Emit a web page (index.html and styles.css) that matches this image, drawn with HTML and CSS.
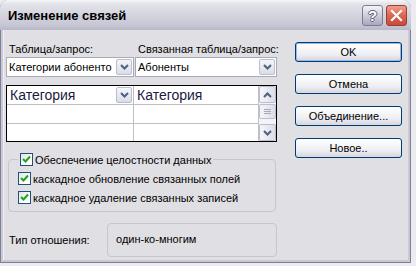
FILE: index.html
```html
<!DOCTYPE html>
<html lang="ru">
<head>
    <meta charset="UTF-8">
    <title>Изменение связей</title>
    <link rel="stylesheet" href="styles.css">
</head>
<body>
    <div class="window">
        <div class="titlebar">
            <span class="title">Изменение связей</span>
            <div class="tb-buttons">
                <span class="tb-btn help">?</span>
                <span class="tb-btn close">
                    <svg width="13" height="13" viewBox="0 0 13 13"><path d="M2 2 L11 11 M11 2 L2 11" stroke="#fff" stroke-width="2.2" stroke-linecap="square"/></svg>
                </span>
            </div>
        </div>
        <div class="client">
            <div class="left">
                <div class="labels">
                    <span class="lbl lbl-1">Таблица/запрос:</span>
                    <span class="lbl">Связанная таблица/запрос:</span>
                </div>
                <div class="combos">
                    <div class="combo combo-1">
                        <span class="combo-text">Категории абоненто</span>
                        <span class="drop"><svg width="9" height="6" viewBox="0 0 9 6"><path d="M1 1 L4.5 4.5 L8 1" fill="none" stroke="#4d6185" stroke-width="2"/></svg></span>
                    </div>
                    <div class="combo combo-2">
                        <span class="combo-text">Абоненты</span>
                        <span class="drop"><svg width="9" height="6" viewBox="0 0 9 6"><path d="M1 1 L4.5 4.5 L8 1" fill="none" stroke="#4d6185" stroke-width="2"/></svg></span>
                    </div>
                </div>
                <div class="grid">
                    <div class="cells">
                        <div class="cell head">
                            <span>Категория</span>
                            <span class="drop"><svg width="9" height="6" viewBox="0 0 9 6"><path d="M1 1 L4.5 4.5 L8 1" fill="none" stroke="#4d6185" stroke-width="2"/></svg></span>
                        </div>
                        <div class="cell head last"><span>Категория</span></div>
                        <div class="cell"></div>
                        <div class="cell last"></div>
                        <div class="cell bottom"></div>
                        <div class="cell last bottom"></div>
                    </div>
                    <div class="scrollbar">
                        <span class="sb-btn"><svg width="9" height="6" viewBox="0 0 9 6"><path d="M1 5 L4.5 1.5 L8 5" fill="none" stroke="#4d6185" stroke-width="2"/></svg></span>
                        <span class="sb-thumb"><svg width="7" height="6" viewBox="0 0 7 6"><path d="M0 0.5 H7 M0 2.5 H7 M0 4.5 H7" stroke="#a4a8b8" stroke-width="1"/></svg></span>
                        <span class="sb-space"></span>
                        <span class="sb-btn"><svg width="9" height="6" viewBox="0 0 9 6"><path d="M1 1 L4.5 4.5 L8 1" fill="none" stroke="#4d6185" stroke-width="2"/></svg></span>
                    </div>
                </div>
                <fieldset class="group">
                    <legend class="check"><span class="box"><svg width="9" height="9" viewBox="0 0 9 9"><path d="M1 4 L3.5 6.5 L8 1.5" fill="none" stroke="#21a121" stroke-width="2"/></svg></span>Обеспечение целостности данных</legend>
                    <div class="check"><span class="box"><svg width="9" height="9" viewBox="0 0 9 9"><path d="M1 4 L3.5 6.5 L8 1.5" fill="none" stroke="#21a121" stroke-width="2"/></svg></span>каскадное обновление связанных полей</div>
                    <div class="check"><span class="box"><svg width="9" height="9" viewBox="0 0 9 9"><path d="M1 4 L3.5 6.5 L8 1.5" fill="none" stroke="#21a121" stroke-width="2"/></svg></span>каскадное удаление связанных записей</div>
                </fieldset>
                <div class="reltype">
                    <span class="rel-label">Тип отношения:</span>
                    <div class="rel-box">один-ко-многим</div>
                </div>
            </div>
            <div class="right">
                <button class="btn default">OK</button>
                <button class="btn">Отмена</button>
                <button class="btn">Объединение...</button>
                <button class="btn">Новое..</button>
            </div>
        </div>
    </div>
</body>
</html>
```

FILE: styles.css
```css
body {
    margin: 0;
    padding: 0;
    width: 416px;
    height: 266px;
    background-color: #ececf0;
    font-family: "Liberation Sans", Arial, sans-serif;
    font-size: 11px;
    color: #000;
    overflow: hidden;
}

.window {
    width: 411px;
    height: 263px;
    box-sizing: border-box;
    border: 1px solid #7f7f98;
    border-top: none;
    border-radius: 8px 8px 0 0;
    background-color: #c9c9d6;
    padding: 0 2px 2px 2px;
    display: flex;
    flex-direction: column;
}

.titlebar {
    height: 30px;
    margin: 0 -3px;
    border-radius: 8px 8px 0 0;
    background: linear-gradient(#f7f7fa 0, #e4e4ec 12%, #d6d6e0 45%, #c8c8d6 80%, #b8b8ca 100%);
    display: flex;
    align-items: center;
    justify-content: space-between;
    padding: 0 4px 0 8px;
    flex-shrink: 0;
}

.title {
    font-family: "Liberation Sans", Arial, sans-serif;
    font-weight: bold;
    font-size: 13px;
    color: #000;
    margin-top: 1px;
}

.tb-buttons {
    display: flex;
    gap: 3px;
}

.tb-btn {
    width: 21px;
    height: 21px;
    box-sizing: border-box;
    border-radius: 3px;
    display: flex;
    align-items: center;
    justify-content: center;
}

.help {
    border: 1px solid #7b7b98;
    background: linear-gradient(#f4f4f8, #c6c6d4 60%, #a9a9bc);
    color: #fff;
    font-weight: bold;
    font-size: 15px;
    text-shadow: 1px 0 #5e5e78, -1px 0 #5e5e78, 0 1px #5e5e78, 0 -1px #5e5e78;
}

.close {
    border: 1px solid #9a3e34;
    background: linear-gradient(#f0a08c, #dc6a55 45%, #c94a36);
}

.client {
    flex: 1;
    background-color: #e0dfe3;
    border-left: 1px solid #f0f0f4;
    display: flex;
    padding: 12px 0 0 2px;
}

.left {
    width: 271px;
}

.labels {
    display: flex;
    height: 14px;
    line-height: 14px;
    white-space: nowrap;
}

.lbl {
    padding-left: 3px;
}

.lbl-1 {
    width: 126px;
    flex-shrink: 0;
}

.combos {
    display: flex;
    gap: 1px;
    margin-top: 1px;
}

.combo {
    height: 20px;
    box-sizing: border-box;
    background-color: #fff;
    border: 1px solid #a5acb5;
    display: flex;
    align-items: center;
    justify-content: space-between;
    padding: 0 1px 0 2px;
}

.combo-1 {
    width: 128px;
}

.combo-2 {
    width: 142px;
}

.combo-text {
    white-space: nowrap;
    overflow: hidden;
}

.drop {
    width: 16px;
    height: 16px;
    box-sizing: border-box;
    border: 1px solid #b8bfd2;
    border-radius: 2px;
    background: linear-gradient(#f6f6f9, #dcdce6);
    display: flex;
    align-items: center;
    justify-content: center;
    flex-shrink: 0;
}

.grid {
    margin-top: 8px;
    height: 57px;
    box-sizing: border-box;
    border: 1px solid #000;
    background-color: #fff;
    display: flex;
}

.cells {
    flex: 1;
    display: grid;
    grid-template-columns: 127px 1fr;
    grid-template-rows: 19px 19px 1fr;
}

.cell {
    border-right: 1px solid #c0c0c0;
    border-bottom: 1px solid #c0c0c0;
    display: flex;
    align-items: center;
    justify-content: space-between;
    padding: 0 1px 0 3px;
}

.cell.bottom {
    border-bottom: none;
}

.head {
    font-size: 14px;
    color: #1a1a40;
}

.scrollbar {
    width: 17px;
    display: flex;
    flex-direction: column;
    background-color: #f4f4f6;
}

.sb-btn {
    height: 17px;
    box-sizing: border-box;
    border: 1px solid #b8bfd2;
    border-radius: 2px;
    background: linear-gradient(90deg, #f6f6f9, #dcdce6);
    display: flex;
    align-items: center;
    justify-content: center;
}

.sb-thumb {
    height: 15px;
    margin-top: 1px;
    box-sizing: border-box;
    border: 1px solid #b8bfd2;
    border-radius: 2px;
    background: linear-gradient(90deg, #f6f6f9, #dcdce6);
    display: flex;
    align-items: center;
    justify-content: center;
}

.sb-space {
    flex: 1;
}

.group {
    margin: 8px 0 0 2px;
    width: 268px;
    box-sizing: border-box;
    border: 1px solid #c6c6d0;
    border-radius: 4px;
    padding: 0 0 4px 9px;
}

.group legend {
    padding: 0 2px;
}

.check {
    display: flex;
    align-items: center;
    height: 19px;
    white-space: nowrap;
}

.box {
    width: 13px;
    height: 13px;
    box-sizing: border-box;
    border: 1px solid #1c5180;
    background: linear-gradient(135deg, #e4e4de, #fff 70%);
    display: flex;
    align-items: center;
    justify-content: center;
    margin-right: 2px;
}

.reltype {
    display: flex;
    align-items: center;
    margin-top: 11px;
    margin-left: 3px;
}

.rel-label {
    width: 98px;
}

.rel-box {
    width: 170px;
    height: 34px;
    box-sizing: border-box;
    border: 1px solid #c6c6d0;
    border-radius: 4px;
    padding: 9px 0 0 8px;
}

.right {
    display: flex;
    flex-direction: column;
    gap: 12px;
    margin-left: 18px;
}

.btn {
    width: 107px;
    height: 20px;
    box-sizing: border-box;
    border: 1px solid #003c74;
    border-radius: 3px;
    background: linear-gradient(#ffffff, #f0f0f4 60%, #d6d6e0);
    font-family: "Liberation Sans", Arial, sans-serif;
    font-size: 11px;
    color: #000;
    padding: 0;
}

.btn.default {
    box-shadow: inset 0 0 0 1px #98b8ea;
}
```
